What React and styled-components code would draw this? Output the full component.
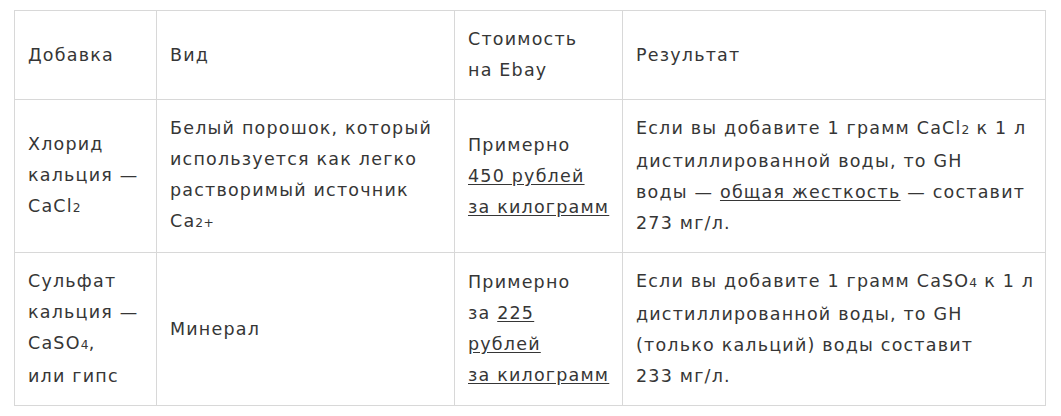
import React from "react";
import styled, { createGlobalStyle } from "styled-components";

const Global = createGlobalStyle`
  html, body { margin: 0; padding: 0; background: #fff; }
  body { font-family: "DejaVu Sans", "Open Sans", sans-serif; }
`;

const Page = styled.div`
  padding: 10px 0 0 14px;
`;

const Table = styled.table`
  border-collapse: collapse;
  table-layout: fixed;
  width: 1031px;
  color: #363636;
  font-size: 17.5px;
  letter-spacing: 1.2px;
  line-height: 31px;
`;

const Cell = styled.td`
  border: 1px solid #d8d8d8;
  padding: 13px 13px;
  vertical-align: middle;
  white-space: nowrap;
  overflow: visible;
`;

const Sub = styled.span`
  font-size: 0.7em;
  letter-spacing: 0.3px;
`;

const Link = styled.a`
  color: #363636;
  text-decoration: underline;
  text-underline-offset: 2px;
`;

export default function App() {
  return (
    <>
      <Global />
      <Page>
        <Table>
          <colgroup>
            <col style={{ width: 142 }} />
            <col style={{ width: 298 }} />
            <col style={{ width: 168 }} />
            <col style={{ width: 423 }} />
          </colgroup>
          <tbody>
            <tr>
              <Cell>Добавка</Cell>
              <Cell>Вид</Cell>
              <Cell>
                Стоимость
                <br />
                на Ebay
              </Cell>
              <Cell>Результат</Cell>
            </tr>
            <tr>
              <Cell>
                Хлорид
                <br />
                кальция —
                <br />
                CaCl<Sub>2</Sub>
              </Cell>
              <Cell>
                Белый порошок, который
                <br />
                используется как легко
                <br />
                растворимый источник
                <br />
                Ca<Sub>2+</Sub>
              </Cell>
              <Cell>
                Примерно
                <br />
                <Link href="#">450 рублей</Link>
                <br />
                <Link href="#">за килограмм</Link>
              </Cell>
              <Cell>
                Если вы добавите 1 грамм CaCl<Sub>2</Sub> к 1 л
                <br />
                дистиллированной воды, то GH
                <br />
                воды — <Link href="#">общая жесткость</Link> — составит
                <br />
                273 мг/л.
              </Cell>
            </tr>
            <tr>
              <Cell>
                Сульфат
                <br />
                кальция —
                <br />
                CaSO<Sub>4</Sub>,
                <br />
                или гипс
              </Cell>
              <Cell>Минерал</Cell>
              <Cell>
                Примерно
                <br />
                за <Link href="#">225</Link>
                <br />
                <Link href="#">рублей</Link>
                <br />
                <Link href="#">за килограмм</Link>
              </Cell>
              <Cell>
                Если вы добавите 1 грамм CaSO<Sub>4</Sub> к 1 л
                <br />
                дистиллированной воды, то GH
                <br />
                (только кальций) воды составит
                <br />
                233 мг/л.
              </Cell>
            </tr>
          </tbody>
        </Table>
      </Page>
    </>
  );
}
